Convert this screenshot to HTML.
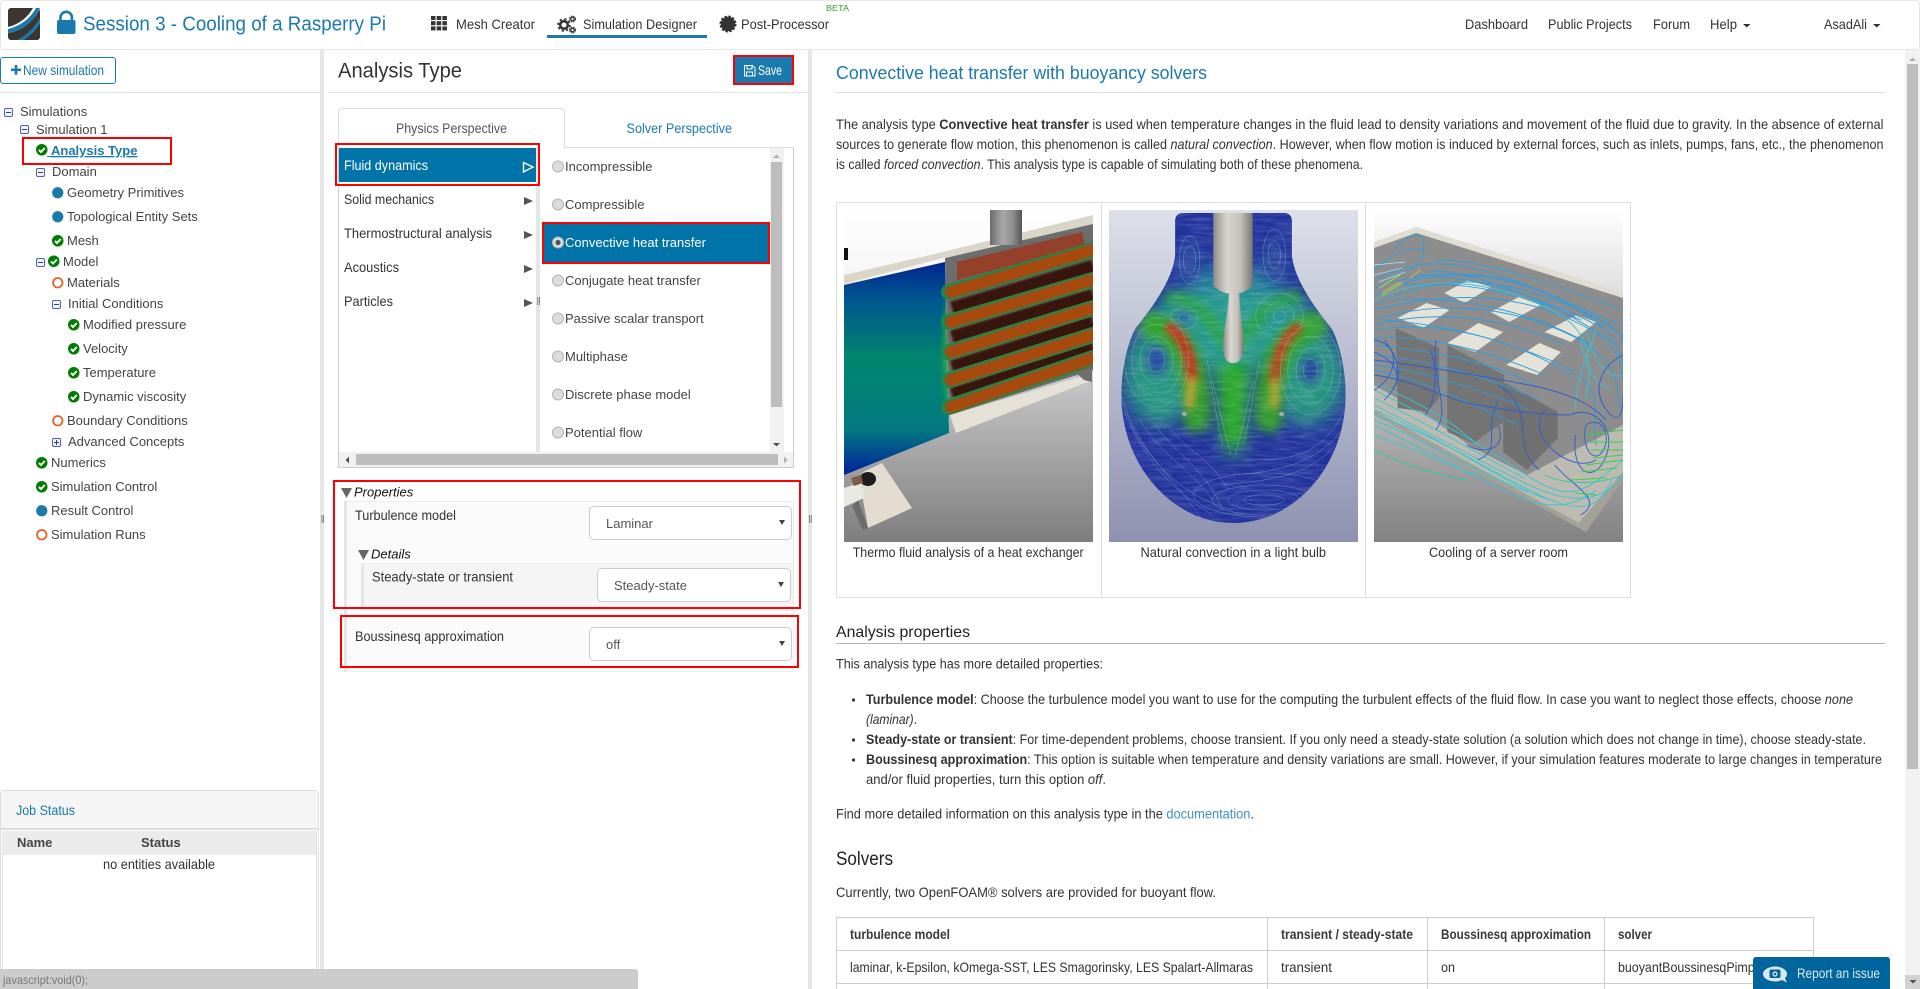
<!DOCTYPE html>
<html><head><meta charset="utf-8"><title>Analysis Type</title>
<style>
html,body{margin:0;padding:0;width:1920px;height:989px;overflow:hidden;background:#fff;font-family:"Liberation Sans",sans-serif}
.b{position:absolute;box-sizing:border-box}
svg.o{position:absolute;left:0;top:0}
svg text{font-family:"Liberation Sans",sans-serif}
.t{font-size:13px;fill:#444}
.l{font-size:14px;fill:#333}
.w{fill:#fff}
.red{position:absolute;box-sizing:border-box;border:2.5px solid #f00}
.sel{position:absolute;box-sizing:border-box;background:#fff;border:1px solid #ccc;border-radius:5px}
</style></head><body>

<!-- navbar -->
<div class="b" style="left:0;top:0;width:1920px;height:50px;background:#fff;border:1px solid #e7e7e7;border-radius:4px"></div>
<div class="b" style="left:547px;top:35px;width:160px;height:3px;background:#1a7aad"></div>

<!-- splitters -->
<div class="b" style="left:320px;top:50px;width:4px;height:939px;background:#e6e6e6"></div>
<div class="b" style="left:808px;top:50px;width:4px;height:939px;background:#e6e6e6"></div>

<!-- left -->
<div class="b" style="left:0;top:57px;width:116px;height:27px;border:1px solid #1a7aad;border-radius:3px;background:#fff"></div>
<div class="b" style="left:0;top:92px;width:320px;height:1px;background:#e4e4e4"></div>
<div class="red" style="left:22px;top:137px;width:150px;height:28px"></div>

<!-- job status -->
<div class="b" style="left:0;top:790px;width:319px;height:199px;border:1px solid #ddd;border-radius:4px 4px 0 0;background:#fff"></div>
<div class="b" style="left:1px;top:791px;width:317px;height:39px;background:#f5f5f5;border-bottom:2px solid #ddd"></div>
<div class="b" style="left:2px;top:831px;width:315px;height:158px;border-left:1px solid #ddd;border-right:1px solid #ddd;background:#fff"></div>
<div class="b" style="left:2px;top:831px;width:314px;height:24px;background:#ebebeb"></div>

<!-- center -->
<div class="b" style="left:328px;top:92px;width:480px;height:1px;background:#e6e6e6"></div>
<div class="b" style="left:733px;top:55px;width:61px;height:30px;background:#1a7aad;border:2.5px solid #f00"></div>
<div class="b" style="left:338px;top:147px;width:456px;height:321px;border:1px solid #ccc;border-top:1px solid #ddd;background:#fff"></div>
<div class="b" style="left:338px;top:108px;width:227px;height:41px;background:#fff;border:1px solid #ddd;border-bottom:none;border-radius:4px 4px 0 0"></div>
<div class="b" style="left:339px;top:147px;width:198px;height:5px;background:#fff"></div>
<div class="b" style="left:536px;top:148px;width:4px;height:304px;background:#e6e6e6"></div>
<div class="b" style="left:339px;top:148px;width:197px;height:34px;background:#0073a8"></div>
<div class="red" style="left:335px;top:143px;width:205px;height:43px"></div>
<div class="b" style="left:544px;top:224px;width:225px;height:38px;background:#0073a8"></div>
<div class="red" style="left:542px;top:222px;width:228px;height:42px"></div>
<!-- inner scrollbars -->
<div class="b" style="left:770px;top:148px;width:14px;height:304px;background:#f1f1f1"></div>
<div class="b" style="left:771px;top:162px;width:11px;height:245px;background:#bdbdbd"></div>
<div class="b" style="left:339px;top:452px;width:454px;height:15px;background:#f1f1f1"></div>
<div class="b" style="left:356px;top:454px;width:422px;height:11px;background:#bdbdbd"></div>

<!-- properties -->
<div class="b" style="left:344px;top:501px;width:450px;height:171px;background:#fbfbfb;border-left:3px solid #e6e6e6;border-top:1px solid #eee;border-bottom:1px solid #eee;border-right:1px solid #eee"></div>
<div class="b" style="left:361px;top:563px;width:432px;height:48px;background:#f5f5f5;border-left:3px solid #e6e6e6;border-top:1px solid #eee;border-bottom:1px solid #eee"></div>
<div class="sel" style="left:589px;top:506px;width:203px;height:34px"></div>
<div class="sel" style="left:597px;top:568px;width:194px;height:34px"></div>
<div class="sel" style="left:589px;top:627px;width:203px;height:34px"></div>
<div class="red" style="left:333px;top:480px;width:468px;height:129px"></div>
<div class="red" style="left:340px;top:615px;width:459px;height:53px"></div>

<!-- right scrollbar -->
<div class="b" style="left:1905px;top:50px;width:15px;height:939px;background:#f1f1f1"></div>
<div class="b" style="left:1907px;top:64px;width:11px;height:705px;background:#bdbdbd"></div>
<div class="b" style="left:1905px;top:975px;width:15px;height:14px;background:#d2d2d2"></div>

<!-- right content lines -->
<div class="b" style="left:836px;top:92px;width:1049px;height:1px;background:#ddd"></div>
<div class="b" style="left:836px;top:202px;width:795px;height:396px;border:1px solid #ddd"></div>
<div class="b" style="left:1101px;top:202px;width:1px;height:396px;background:#ddd"></div>
<div class="b" style="left:1365px;top:202px;width:1px;height:396px;background:#ddd"></div>
<div class="b" style="left:836px;top:643px;width:1049px;height:1px;background:#b5b5b5"></div>
<div class="b" style="left:836px;top:917px;width:978px;height:72px;border:1px solid #ccc;border-bottom:none"></div>
<div class="b" style="left:836px;top:950px;width:978px;height:1px;background:#ccc"></div>
<div class="b" style="left:836px;top:983px;width:978px;height:1px;background:#ccc"></div>
<div class="b" style="left:1267px;top:917px;width:1px;height:72px;background:#ccc"></div>
<div class="b" style="left:1427px;top:917px;width:1px;height:72px;background:#ccc"></div>
<div class="b" style="left:1604px;top:917px;width:1px;height:72px;background:#ccc"></div>

<!-- Image 1 -->
<svg class="o" style="left:844px;top:210px" width="249" height="332" viewBox="0 0 249 332">
<defs>
<linearGradient id="a1" x1="0" y1="0" x2="0" y2="1"><stop offset="0" stop-color="#fff"/><stop offset=".3" stop-color="#f1f1f1"/><stop offset=".5" stop-color="#c8c8c8"/><stop offset="1" stop-color="#7e7e7e"/></linearGradient>
<linearGradient id="a2" x1="0" y1="0" x2="0" y2="1"><stop offset="0" stop-color="#00258f"/><stop offset=".18" stop-color="#00578f"/><stop offset=".45" stop-color="#02846f"/><stop offset=".78" stop-color="#037a80"/><stop offset="1" stop-color="#00209a"/></linearGradient>
<linearGradient id="a3" x1="0" y1="0" x2="1" y2="0"><stop offset="0" stop-color="#6b6b6b"/><stop offset=".4" stop-color="#a8a8a8"/><stop offset=".7" stop-color="#8f8f8f"/><stop offset="1" stop-color="#555"/></linearGradient>
<filter id="f1"><feGaussianBlur stdDeviation="1"/></filter>
<filter id="f2" x="-60%" y="-20%" width="220%" height="140%"><feGaussianBlur stdDeviation="3"/></filter>
<clipPath id="c1"><path d="M0 75L101 52 105 223 0 265Z"/></clipPath>
</defs>
<rect width="249" height="332" fill="url(#a1)"/>
<path d="M0 65L99 42 249 5V17L99 48 0 74Z" fill="#d9d5c8"/>
<rect x="0" y="38" width="4" height="12" fill="#111"/>
<path d="M0 75L101 52 105 223 0 265Z" fill="url(#a2)"/>
<g clip-path="url(#c1)"><ellipse cx="106" cy="140" rx="6" ry="56" fill="#2fae3f" filter="url(#f2)"/></g>
<path d="M101 48L249 14V160L105 205Z" fill="#6d6d6d"/>
<path d="M113 52L238 22 241 36 113 70Z" fill="#93412a"/>
<g filter="url(#f1)">
<path d="M108 98L249 56" stroke="#38140f" stroke-width="13"/>
<path d="M108 127L249 85" stroke="#38140f" stroke-width="13"/>
<path d="M108 157L249 112" stroke="#38140f" stroke-width="13"/>
<path d="M108 184L249 137" stroke="#38140f" stroke-width="12"/>
</g>
<g fill="none" stroke-linecap="round">
<g stroke="#1d8a50" stroke-width="16"><path d="M105 82L249 40"/><path d="M105 112L249 70"/><path d="M105 142L249 98"/><path d="M105 170L249 125"/><path d="M105 197L249 148"/></g>
<g stroke="#a9480c" stroke-width="12" filter="url(#f1)"><path d="M107 82L249 40"/><path d="M107 112L249 70"/><path d="M107 142L249 98"/><path d="M107 170L249 125"/><path d="M107 197L249 148"/></g>
</g>
<path d="M106 205L249 163V170L112 223Z" fill="#e6e1d6"/>
<path d="M231 162L248 158V172L240 170Z" fill="#6f6f6f"/>
<rect x="146" y="0" width="32" height="35" fill="url(#a3)"/>
<path d="M19 262L38 253 68 298 24 318 19 290Z" fill="#e2ddd0"/>
<path d="M14 290L24 318 19 320 8 296Z" fill="#6c6c6c"/>
<path d="M0 278L18 272 20 288 0 297Z" fill="#e9e9e3"/>
<ellipse cx="24" cy="269" rx="8" ry="7" fill="#1d1d1d"/>
<path d="M7 268l10-3 2 8-9 3z" fill="#7d5a45"/>
</svg>

<!-- Image 2 -->
<svg class="o" style="left:1109px;top:210px" width="249" height="332" viewBox="0 0 241 332" preserveAspectRatio="none">
<defs>
<linearGradient id="b1" x1="0" y1="0" x2="0" y2="1"><stop offset="0" stop-color="#dde0e9"/><stop offset=".5" stop-color="#b6b9cd"/><stop offset="1" stop-color="#8e92b0"/></linearGradient>
<linearGradient id="b2" x1="0" y1="0" x2="1" y2="0"><stop offset="0" stop-color="#8f8d86"/><stop offset=".35" stop-color="#d8d6ce"/><stop offset=".7" stop-color="#c2c0b8"/><stop offset="1" stop-color="#787670"/></linearGradient>
<filter id="f3" x="-40%" y="-40%" width="180%" height="180%"><feGaussianBlur stdDeviation="9"/></filter>
<filter id="f4" x="-40%" y="-40%" width="180%" height="180%"><feGaussianBlur stdDeviation="5"/></filter>
<filter id="f5" x="-40%" y="-40%" width="180%" height="180%"><feGaussianBlur stdDeviation="3.5"/></filter>
<filter id="n1" x="0" y="0" width="100%" height="100%"><feTurbulence type="fractalNoise" baseFrequency=".05 .35" numOctaves="2" seed="4"/><feColorMatrix values="0 0 0 0 .75  0 0 0 0 .88  0 0 0 0 1  1.600 0 0 0 -.55"/></filter>
<clipPath id="c2"><path d="M64 11Q64 3 72 3H169Q177 3 177 11V45C179 70 201 100 215 118C223 132 229 160 229 185C229 255 180 313 120.500 313C61 313 12 255 12 185C12 160 18 132 26 118C40 100 62 70 64 45Z"/></clipPath>
</defs>
<rect width="241" height="332" fill="url(#b1)"/>
<g clip-path="url(#c2)">
<rect width="241" height="332" fill="#22329c"/>
<g filter="url(#f3)">
<ellipse cx="120" cy="118" rx="85" ry="42" fill="#259a90"/>
<ellipse cx="50" cy="165" rx="36" ry="50" fill="#259580"/>
<ellipse cx="192" cy="165" rx="36" ry="50" fill="#259580"/>
<path d="M98 150L143 150 128 245 113 245Z" fill="#22a04a"/>
<ellipse cx="120" cy="68" rx="50" ry="12" fill="#24789c"/>
</g>
<g filter="url(#f4)" fill="none" stroke-linecap="round" opacity=".9">
<path d="M42 115C70 120 90 170 85 210" stroke="#35a522" stroke-width="26"/>
<path d="M199 115C170 120 150 170 155 210" stroke="#35a522" stroke-width="26"/>
<path d="M120 165V225" stroke="#2ea822" stroke-width="18"/>
<path d="M60 88C80 88 100 110 110 130" stroke="#2ca344" stroke-width="14"/>
<path d="M181 88C160 88 140 110 130 130" stroke="#2ca344" stroke-width="14"/>
</g>
<g filter="url(#f5)" fill="none" stroke-linecap="round">
<path d="M60 118C72 128 80 145 80 170" stroke="#c82f14" stroke-width="11"/>
<path d="M182 118C168 128 161 150 160 172" stroke="#c03c14" stroke-width="10"/>
<path d="M80 172L78 195" stroke="#c8a02a" stroke-width="8"/>
<path d="M160 174L160 195" stroke="#b8a22a" stroke-width="8"/>
</g>
<g filter="url(#f4)"><ellipse cx="46" cy="150" rx="9" ry="14" fill="#2447a6"/><ellipse cx="195" cy="160" rx="9" ry="13" fill="#24409f"/><ellipse cx="73" cy="108" rx="7" ry="6" fill="#2a57a8"/><ellipse cx="165" cy="106" rx="7" ry="7" fill="#2b8da0"/><ellipse cx="78" cy="50" rx="10" ry="20" fill="#2b479f"/><ellipse cx="160" cy="50" rx="10" ry="20" fill="#2b479f"/></g>
<rect width="241" height="332" filter="url(#n1)" opacity=".22"/>
<g fill="none" stroke="#a9c8e4" stroke-width=".45" opacity=".6">
<ellipse cx="46" cy="150" rx="8" ry="12"/><ellipse cx="46" cy="150" rx="16" ry="24"/><ellipse cx="46" cy="150" rx="24" ry="36"/><ellipse cx="46" cy="150" rx="31" ry="47"/>
<ellipse cx="195" cy="160" rx="7" ry="11"/><ellipse cx="195" cy="160" rx="14" ry="22"/><ellipse cx="195" cy="160" rx="22" ry="34"/><ellipse cx="195" cy="160" rx="29" ry="45"/>
<ellipse cx="73" cy="108" rx="6" ry="5"/><ellipse cx="73" cy="108" rx="13" ry="11"/><ellipse cx="165" cy="106" rx="6" ry="6"/><ellipse cx="165" cy="106" rx="14" ry="14"/><ellipse cx="165" cy="106" rx="23" ry="23"/>
<ellipse cx="78" cy="50" rx="6" ry="14"/><ellipse cx="78" cy="50" rx="10" ry="24"/><ellipse cx="160" cy="45" rx="6" ry="14"/><ellipse cx="160" cy="45" rx="11" ry="26"/>
<ellipse cx="150" cy="290" rx="20" ry="5"/><ellipse cx="150" cy="290" rx="35" ry="10"/><ellipse cx="150" cy="290" rx="50" ry="15"/><ellipse cx="150" cy="285" rx="68" ry="22"/>
<path d="M14 200C40 260 80 290 120 300"/><path d="M20 215C45 265 70 285 100 305"/><path d="M12 185C25 240 70 275 90 310"/><path d="M30 210C45 240 80 260 100 290"/><path d="M45 215C60 240 95 260 110 300"/><path d="M60 220C75 240 100 250 115 280"/>
<path d="M228 200C205 250 170 250 130 250"/><path d="M225 220C200 255 160 262 120 265"/><path d="M215 240C190 265 160 270 110 275"/><path d="M100 170C105 190 110 215 118 245"/><path d="M140 170C135 190 130 215 122 245"/><path d="M95 150C100 180 105 215 110 235"/><path d="M146 150C140 180 135 215 130 235"/>
</g>
</g>
<path d="M101 3H139V76Q130 84 120 84Q110 84 101 76Z" fill="url(#b2)"/>
<path d="M116 82H126C127 110 132 125 130 142Q128 153 120 153Q112 153 111 142C109 125 115 110 116 82Z" fill="url(#b2)"/>
<ellipse cx="73" cy="204" rx="2.500" ry="2" fill="#aaa"/><ellipse cx="167" cy="204" rx="2.500" ry="2" fill="#aaa"/>
</svg>

<!-- Image 3 -->
<svg class="o" style="left:1374px;top:210px" width="249" height="332" viewBox="0 0 241 332" preserveAspectRatio="none">
<defs>
<linearGradient id="d1" x1="0" y1="0" x2="0" y2="1"><stop offset="0" stop-color="#fefefe"/><stop offset=".3" stop-color="#d8d8d8"/><stop offset=".65" stop-color="#b0b0b0"/><stop offset="1" stop-color="#828282"/></linearGradient>
</defs>
<rect width="241" height="332" fill="url(#d1)"/>
<path d="M0 32L41 17 241 82V88L0 38Z" fill="#dfdcd1"/>
<path d="M0 38L41 23 241 88V255L205 310 0 190Z" fill="#8d8d8d"/>
<path d="M0 175L51 205 96 238 148 265 241 215V262L198 313 0 200Z" fill="#bdbbb1"/>
<path d="M198 313L241 262V270L205 322 0 205V200Z" fill="#a3a198"/>
<path d="M21 118L63 138 63 188 51 202 23 198Z" fill="#747474"/>
<path d="M71 135L126 165 125 212 96 233 71 222Z" fill="#747474"/>
<path d="M125 172L178 202 178 228 148 260 125 242Z" fill="#717171"/>
<g fill="#e5e2d8">
<path d="M23 108L51 93 73 100 48 118Z"/><path d="M68 83L91 70 113 77 88 93Z"/><path d="M113 102L140 87 161 95 131 112Z"/><path d="M165 122L196 105 215 112 191 132Z"/><path d="M71 133L101 113 125 122 98 142Z"/><path d="M128 155L160 133 181 142 158 165Z"/>
</g>
<g fill="none" stroke-width=".9">
<g stroke="#2d9de0"><path d="M0 95C40 75 90 60 160 85S240 120 241 135"/><path d="M0 85C50 60 110 55 170 85S235 130 241 155"/><path d="M0 70C30 55 60 45 120 65S220 110 241 115"/><path d="M0 110C60 90 130 95 190 125S230 190 241 200"/><path d="M0 120C60 110 110 125 170 150S210 200 215 235"/><path d="M20 40C35 20 50 20 48 40S30 60 10 70"/><path d="M0 60C15 45 35 35 48 40"/><path d="M241 100C200 85 120 50 60 50"/>
<path d="M0 100C60 85 120 80 180 105S238 150 241 170"/><path d="M0 78C60 55 130 62 190 95S235 125 241 125"/><path d="M10 110C70 115 140 130 190 165"/><path d="M0 128C50 125 110 140 165 165"/><path d="M0 135C50 140 110 150 155 175"/><path d="M30 75C90 70 150 85 200 110"/><path d="M40 65C100 65 170 90 225 120"/>
<path d="M0 145C50 150 105 165 160 190"/><path d="M0 155C45 160 100 178 150 200"/><path d="M0 160C50 170 95 195 140 215"/><path d="M0 115C55 100 125 105 185 135"/><path d="M20 90C80 85 150 100 210 135"/><path d="M55 60C110 65 180 95 235 135"/></g>
<g stroke="#35c5d5"><path d="M0 195C40 215 100 250 150 275S230 285 241 265"/><path d="M0 205C60 225 110 260 160 285S220 290 230 270"/><path d="M0 180C50 205 90 225 140 260S200 285 241 250"/><path d="M0 215C40 235 85 260 125 280S190 300 215 280"/><path d="M0 90C50 65 100 70 150 90S215 130 205 190"/><path d="M0 225C30 235 70 255 100 265"/><path d="M215 120C205 150 195 170 195 200"/>
<path d="M0 188C45 210 95 240 145 268"/><path d="M0 200C50 220 100 255 150 282"/><path d="M0 210C50 230 100 265 170 290"/><path d="M0 172C35 190 70 205 100 235"/><path d="M205 120C212 150 225 170 241 165"/><path d="M200 130C205 160 215 175 230 180"/></g>
<g stroke="#2b5fd0"><path d="M0 130C30 135 20 170 0 180"/><path d="M10 130C25 150 30 170 10 190"/><path d="M60 130C55 170 75 200 60 220"/><path d="M120 190C105 225 125 240 100 250"/><path d="M120 215C130 240 105 245 90 235"/><path d="M190 205C210 195 235 215 225 245S190 265 195 225"/><path d="M205 215C220 205 230 225 222 240S200 240 205 215"/><path d="M165 200C145 225 190 265 215 250"/><path d="M241 145C220 155 210 180 225 200S241 195 241 185"/><path d="M175 255C190 275 225 290 200 305"/><path d="M120 175C160 200 130 235 160 260"/><path d="M0 165C40 170 70 190 100 195S160 205 190 205"/><path d="M0 150C40 155 100 165 150 175S215 200 225 210"/><path d="M0 142C20 150 28 165 18 180"/><path d="M55 140C62 165 60 190 50 205"/></g>
<g stroke="#25c9a0"><path d="M0 240C30 255 60 265 90 270"/><path d="M165 265C185 275 215 275 241 265"/></g>
<g stroke="#34d04a"><path d="M205 225L241 220"/><path d="M210 240L241 240"/><path d="M205 255L241 250"/><path d="M190 270L225 268"/><path d="M195 283L215 285"/><path d="M208 232L241 232"/><path d="M212 248L241 245"/><path d="M200 262L235 258"/></g>
<g stroke="#9fe23a" stroke-width="1"><path d="M5 78L25 65"/><path d="M8 85L28 72"/></g>
<g stroke="#e6b32e" stroke-width="1"><path d="M8 82L25 72"/><path d="M35 68L45 60"/></g>
<g stroke="#9edcf0"><path d="M0 55L30 52"/><path d="M0 65L28 58"/><path d="M5 72L30 62"/></g>
</g>
</svg>

<!-- main overlay: icons + text -->
<svg class="o" width="1920" height="989" viewBox="0 0 1920 989">
<defs>
<g id="chk"><circle cx="5.750" cy="5.750" r="5.750" fill="#007c00"/><path d="M2.900 5.900L5 8 8.800 4" fill="none" stroke="#fff" stroke-width="1.900"/></g>
<g id="mi"><rect x=".5" y=".5" width="8" height="8" rx="1.400" fill="#f4f5fb" stroke="#4c60b8"/><path d="M2 4.500H7" stroke="#2c3ea0"/></g>
<g id="pl"><rect x=".5" y=".5" width="8" height="8" rx="1.400" fill="#f4f5fb" stroke="#4c60b8"/><path d="M2 4.500H7M4.500 2V7" stroke="#2c3ea0"/></g>
<g id="ring"><circle cx="5.750" cy="5.750" r="4.750" fill="#fff" stroke="#e8622a" stroke-width="1.800"/></g>
<g id="dot"><circle cx="5.750" cy="5.750" r="5.600" fill="#1a7aad"/></g>
<g id="rad"><circle cx="6" cy="6" r="5.500" fill="#dcdcdc" stroke="#b5b5b5"/></g>
</defs>

<!-- logo -->
<rect x="8" y="8" width="32" height="32" rx="3" fill="#3b3632"/>
<path d="M8 27C20 24 28 17 33 8H40V9C33 22 22 31 8 33Z" fill="#fff"/>
<path d="M8 29C20 26 30 19 36 8H40C34 22 22 31 8 33Z" fill="#1a7aad"/>
<path d="M17 40C26 36 34 28 40 18V24C35 31 30 36 24 40Z" fill="#1a7aad"/>
<!-- lock -->
<rect x="57" y="20" width="18.500" height="14" rx="2" fill="#1a7aad"/>
<path d="M60.500 21V17.500a5.700 5.700 0 0 1 11.400 0V21" fill="none" stroke="#1a7aad" stroke-width="2.600"/>
<text x="83" y="30.500" font-size="20" fill="#1a7aad" textLength="303" lengthAdjust="spacingAndGlyphs">Session 3 - Cooling of a Rasperry Pi</text>

<!-- mesh icon -->
<g fill="#333"><rect x="431" y="16" width="4.500" height="4"/><rect x="436.700" y="16" width="4.500" height="4"/><rect x="442.400" y="16" width="4.500" height="4"/><rect x="431" y="21.200" width="4.500" height="4"/><rect x="436.700" y="21.200" width="4.500" height="4"/><rect x="442.400" y="21.200" width="4.500" height="4"/><rect x="431" y="26.400" width="4.500" height="4"/><rect x="436.700" y="26.400" width="4.500" height="4"/><rect x="442.400" y="26.400" width="4.500" height="4"/></g>
<text x="456" y="29" class="l" textLength="79" lengthAdjust="spacingAndGlyphs">Mesh Creator</text>
<!-- gears icon -->
<g fill="none" stroke="#333"><circle cx="564" cy="25" r="3.800" stroke-width="2.600"/><circle cx="564" cy="25" r="6" stroke-width="1.600" stroke-dasharray="2.400 2.300"/><circle cx="572.500" cy="19" r="1.800" stroke-width="1.400"/><circle cx="572.500" cy="19" r="3" stroke-width="1" stroke-dasharray="1.500 .9"/><circle cx="572.500" cy="30" r="1.800" stroke-width="1.400"/><circle cx="572.500" cy="30" r="3" stroke-width="1" stroke-dasharray="1.500 .9"/></g>
<text x="583" y="29" class="l" textLength="114" lengthAdjust="spacingAndGlyphs">Simulation Designer</text>
<!-- post-processor icon -->
<circle cx="728" cy="24" r="7.200" fill="#333"/><circle cx="728" cy="24" r="7.800" fill="none" stroke="#333" stroke-width="1.400" stroke-dasharray="2.500 1.600"/>
<text x="741" y="29" class="l" textLength="88" lengthAdjust="spacingAndGlyphs">Post-Processor</text>
<text x="826" y="11" font-size="8" fill="#2f9a2f" textLength="23" lengthAdjust="spacingAndGlyphs">BETA</text>

<text x="1465" y="29" class="l" textLength="63" lengthAdjust="spacingAndGlyphs">Dashboard</text>
<text x="1548" y="29" class="l" textLength="84" lengthAdjust="spacingAndGlyphs">Public Projects</text>
<text x="1653" y="29" class="l" textLength="37" lengthAdjust="spacingAndGlyphs">Forum</text>
<text x="1710" y="29" class="l" textLength="27" lengthAdjust="spacingAndGlyphs">Help</text>
<path d="M1743 24h7.500l-3.700 3.500z" fill="#333"/>
<text x="1824" y="29" class="l" textLength="43" lengthAdjust="spacingAndGlyphs">AsadAli</text>
<path d="M1873 24h7.500l-3.700 3.500z" fill="#333"/>

<!-- new simulation -->
<path d="M11 68.500h3.700V65h2.600v3.500H21v2.600h-3.700v3.700h-2.600v-3.700H11z" fill="#1a7aad"/>
<text x="23" y="75" class="l" style="fill:#1a7aad" textLength="81" lengthAdjust="spacingAndGlyphs">New simulation</text>

<!-- tree -->
<use href="#mi" x="4" y="108"/><text x="20" y="116" class="t">Simulations</text>
<use href="#mi" x="20" y="125"/><text x="36" y="134" class="t">Simulation 1</text>
<use href="#chk" x="36" y="144"/><text x="51" y="155" font-size="13" font-weight="bold" fill="#1a7aad" text-decoration="underline">Analysis Type</text>
<path d="M47 156.500H51" stroke="#1a7aad"/>
<use href="#mi" x="36" y="168"/><text x="52" y="176" class="t">Domain</text>
<use href="#dot" x="52" y="187"/><text x="67" y="197" class="t">Geometry Primitives</text>
<use href="#dot" x="52" y="211"/><text x="67" y="221" class="t">Topological Entity Sets</text>
<use href="#chk" x="52" y="235"/><text x="67" y="245" class="t">Mesh</text>
<use href="#mi" x="36" y="258"/><use href="#chk" x="48" y="255.500"/><text x="63" y="266" class="t">Model</text>
<use href="#ring" x="52" y="277"/><text x="67" y="287" class="t">Materials</text>
<use href="#mi" x="52" y="300"/><text x="68" y="308" class="t">Initial Conditions</text>
<use href="#chk" x="68" y="319"/><text x="83" y="329" class="t">Modified pressure</text>
<use href="#chk" x="68" y="343"/><text x="83" y="353" class="t">Velocity</text>
<use href="#chk" x="68" y="367"/><text x="83" y="377" class="t">Temperature</text>
<use href="#chk" x="68" y="391"/><text x="83" y="401" class="t">Dynamic viscosity</text>
<use href="#ring" x="52" y="415"/><text x="67" y="425" class="t">Boundary Conditions</text>
<use href="#pl" x="52" y="438"/><text x="68" y="446" class="t">Advanced Concepts</text>
<use href="#chk" x="36" y="457"/><text x="51" y="467" class="t">Numerics</text>
<use href="#chk" x="36" y="481"/><text x="51" y="491" class="t">Simulation Control</text>
<use href="#dot" x="36" y="505"/><text x="51" y="515" class="t">Result Control</text>
<use href="#ring" x="36" y="529"/><text x="51" y="539" class="t">Simulation Runs</text>

<!-- splitter grips -->
<g fill="#777"><rect x="321.500" y="515" width=".9" height="8"/><rect x="323.200" y="515" width=".9" height="8"/><rect x="809" y="515" width=".9" height="8"/><rect x="810.800" y="515" width=".9" height="8"/><rect x="537.300" y="297" width=".9" height="8"/><rect x="539" y="297" width=".9" height="8"/></g>

<!-- job status -->
<text x="16" y="815" class="l" style="fill:#1a7aad" textLength="59" lengthAdjust="spacingAndGlyphs">Job Status</text>
<text x="17" y="847" font-size="13" font-weight="bold" fill="#444">Name</text>
<text x="141" y="847" font-size="13" font-weight="bold" fill="#444">Status</text>
<text x="103" y="869" class="l" textLength="112" lengthAdjust="spacingAndGlyphs">no entities available</text>

<!-- center -->
<text x="338" y="77.500" font-size="21.500" fill="#333" textLength="124" lengthAdjust="spacingAndGlyphs">Analysis Type</text>
<path d="M744.500 65.500h8l2.500 2.500v8h-10.500zM747 65.500v3.500h5v-3.500M746.500 76v-4h6v4" fill="none" stroke="#fff" stroke-width="1"/>
<text x="758" y="75" class="l" style="fill:#fff" textLength="24" lengthAdjust="spacingAndGlyphs">Save</text>
<text x="396" y="133" class="l" style="fill:#555" textLength="111" lengthAdjust="spacingAndGlyphs">Physics Perspective</text>
<text x="626.500" y="133" class="l" style="fill:#1a7aad" textLength="105.500" lengthAdjust="spacingAndGlyphs">Solver Perspective</text>

<text x="344" y="170" class="l" style="fill:#fff" textLength="84" lengthAdjust="spacingAndGlyphs">Fluid dynamics</text>
<text x="344" y="204" class="l" textLength="90" lengthAdjust="spacingAndGlyphs">Solid mechanics</text>
<text x="344" y="238" class="l" textLength="148" lengthAdjust="spacingAndGlyphs">Thermostructural analysis</text>
<text x="344" y="272" class="l" textLength="55" lengthAdjust="spacingAndGlyphs">Acoustics</text>
<text x="344" y="306" class="l" textLength="49" lengthAdjust="spacingAndGlyphs">Particles</text>
<path d="M523.500 162.500L533 167 523.500 172Z" fill="none" stroke="#fff" stroke-width="1.400"/>
<g fill="#555"><path d="M524 197l9 4-9 4z"/><path d="M524 231l9 4-9 4z"/><path d="M524 265l9 4-9 4z"/><path d="M524 299l9 4-9 4z"/></g>

<use href="#rad" x="552" y="160.500"/><text x="565" y="171" class="t">Incompressible</text>
<use href="#rad" x="552" y="198.500"/><text x="565" y="209" class="t">Compressible</text>
<use href="#rad" x="552" y="236.500"/><circle cx="558" cy="242.500" r="2.600" fill="#555"/><text x="565" y="247" class="t" style="fill:#fff">Convective heat transfer</text>
<use href="#rad" x="552" y="274.500"/><text x="565" y="285" class="t">Conjugate heat transfer</text>
<use href="#rad" x="552" y="312.500"/><text x="565" y="323" class="t">Passive scalar transport</text>
<use href="#rad" x="552" y="350.500"/><text x="565" y="361" class="t">Multiphase</text>
<use href="#rad" x="552" y="388.500"/><text x="565" y="399" class="t">Discrete phase model</text>
<use href="#rad" x="552" y="426.500"/><text x="565" y="437" class="t">Potential flow</text>
<path d="M773 158l3.500-3.500 3.500 3.500z" fill="#b0b0b0"/><path d="M773 443h7l-3.500 3.500z" fill="#505050"/>
<path d="M349 456.500v7l-3.500-3.500z" fill="#505050"/><path d="M784 456.500v7l3.500-3.500z" fill="#b0b0b0"/>

<path d="M341 488h11l-5.500 10z" fill="#666"/>
<text x="354" y="496.500" font-size="13" font-style="italic" fill="#111">Properties</text>
<text x="355" y="520" class="l" textLength="101" lengthAdjust="spacingAndGlyphs">Turbulence model</text>
<text x="606" y="528" class="t" style="fill:#555">Laminar</text>
<path d="M779 520h6l-3 5z" fill="#444"/>
<path d="M358 550h11l-5.500 10z" fill="#666"/>
<text x="371" y="558.500" font-size="13" font-style="italic" fill="#111">Details</text>
<text x="372" y="581.700" class="l" textLength="141" lengthAdjust="spacingAndGlyphs">Steady-state or transient</text>
<text x="614" y="590" class="t" style="fill:#555">Steady-state</text>
<path d="M778 582h6l-3 5z" fill="#444"/>
<text x="355" y="641" class="l" textLength="149" lengthAdjust="spacingAndGlyphs">Boussinesq approximation</text>
<text x="606" y="649" class="t" style="fill:#555">off</text>
<path d="M779 641h6l-3 5z" fill="#444"/>

<!-- right -->
<path d="M1909 61l3.500-3.500 3.500 3.500z" fill="#b0b0b0"/><path d="M1909.500 980h7l-3.500 3.500z" fill="#505050"/>
<text x="836" y="79" font-size="18.500" fill="#1a7aad" textLength="371" lengthAdjust="spacingAndGlyphs">Convective heat transfer with buoyancy solvers</text>
<text x="836" y="129" class="l" textLength="1047.500" lengthAdjust="spacingAndGlyphs">The analysis type <tspan font-weight="bold">Convective heat transfer</tspan> is used when temperature changes in the fluid lead to density variations and movement of the fluid due to gravity. In the absence of external</text>
<text x="836" y="149" class="l" textLength="1047.500" lengthAdjust="spacingAndGlyphs">sources to generate flow motion, this phenomenon is called <tspan font-style="italic">natural convection</tspan>. However, when flow motion is induced by external forces, such as inlets, pumps, fans, etc., the phenomenon</text>
<text x="836" y="169" class="l" textLength="527" lengthAdjust="spacingAndGlyphs">is called <tspan font-style="italic">forced convection</tspan>. This analysis type is capable of simulating both of these phenomena.</text>

<text x="852.700" y="557" class="l" textLength="231" lengthAdjust="spacingAndGlyphs">Thermo fluid analysis of a heat exchanger</text>
<text x="1140.500" y="557" class="l" textLength="185.500" lengthAdjust="spacingAndGlyphs">Natural convection in a light bulb</text>
<text x="1429" y="557" class="l" textLength="139" lengthAdjust="spacingAndGlyphs">Cooling of a server room</text>

<text x="836" y="637" font-size="16" fill="#222" textLength="134" lengthAdjust="spacingAndGlyphs">Analysis properties</text>
<text x="836" y="668.500" class="l" textLength="267" lengthAdjust="spacingAndGlyphs">This analysis type has more detailed properties:</text>
<g fill="#333"><circle cx="853.500" cy="700" r="1.600"/><circle cx="853.500" cy="740" r="1.600"/><circle cx="853.500" cy="760" r="1.600"/></g>
<text x="866" y="704" class="l" textLength="987" lengthAdjust="spacingAndGlyphs"><tspan font-weight="bold">Turbulence model</tspan>: Choose the turbulence model you want to use for the computing the turbulent effects of the fluid flow. In case you want to neglect those effects, choose <tspan font-style="italic">none</tspan></text>
<text x="866" y="724" class="l" font-style="italic" textLength="51" lengthAdjust="spacingAndGlyphs">(laminar)<tspan font-style="normal">.</tspan></text>
<text x="866" y="744" class="l" textLength="1000" lengthAdjust="spacingAndGlyphs"><tspan font-weight="bold">Steady-state or transient</tspan>: For time-dependent problems, choose transient. If you only need a steady-state solution (a solution which does not change in time), choose steady-state.</text>
<text x="866" y="764" class="l" textLength="1016" lengthAdjust="spacingAndGlyphs"><tspan font-weight="bold">Boussinesq approximation</tspan>: This option is suitable when temperature and density variations are small. However, if your simulation features moderate to large changes in temperature</text>
<text x="866" y="784" class="l" textLength="240" lengthAdjust="spacingAndGlyphs">and/or fluid properties, turn this option <tspan font-style="italic">off</tspan>.</text>
<text x="836" y="818.500" class="l" textLength="418" lengthAdjust="spacingAndGlyphs">Find more detailed information on this analysis type in the <tspan fill="#3f8fc4">documentation</tspan>.</text>
<text x="836" y="865" font-size="19" fill="#222" textLength="57" lengthAdjust="spacingAndGlyphs">Solvers</text>
<text x="836" y="897" class="l" textLength="380" lengthAdjust="spacingAndGlyphs">Currently, two OpenFOAM® solvers are provided for buoyant flow.</text>

<g font-weight="bold" font-size="14" fill="#3a3a3a">
<text x="850" y="939" textLength="100" lengthAdjust="spacingAndGlyphs">turbulence model</text>
<text x="1281" y="939" textLength="132" lengthAdjust="spacingAndGlyphs">transient / steady-state</text>
<text x="1441" y="939" textLength="150" lengthAdjust="spacingAndGlyphs">Boussinesq approximation</text>
<text x="1618" y="939" textLength="34" lengthAdjust="spacingAndGlyphs">solver</text>
</g>
<text x="850" y="972" class="l" textLength="403" lengthAdjust="spacingAndGlyphs">laminar, k-Epsilon, kOmega-SST, LES Smagorinsky, LES Spalart-Allmaras</text>
<text x="1281" y="972" class="l" textLength="51" lengthAdjust="spacingAndGlyphs">transient</text>
<text x="1441" y="972" class="l" textLength="14" lengthAdjust="spacingAndGlyphs">on</text>
<text x="1618" y="972" class="l" textLength="178" lengthAdjust="spacingAndGlyphs">buoyantBoussinesqPimpleFoam</text>
</svg>

<!-- status bar -->
<div class="b" style="left:0;top:969px;width:638px;height:20px;background:#ccc;border-radius:0 3px 0 0"></div>
<!-- report button -->
<div class="b" style="left:1753px;top:957px;width:137px;height:32px;background:#00659c;border-radius:3px 3px 0 0"></div>
<svg class="o" width="1920" height="989" viewBox="0 0 1920 989" style="pointer-events:none">
<text x="3" y="984" font-size="12" fill="#777" textLength="85" lengthAdjust="spacingAndGlyphs">javascript:void(0);</text>
<ellipse cx="1775" cy="974" rx="12" ry="7.500" fill="#dbe8f1"/>
<path d="M1780 979l7 3.500-3-6z" fill="#dbe8f1"/>
<rect x="1769.500" y="969.500" width="11" height="8.500" rx="1.500" fill="#00659c"/>
<circle cx="1775" cy="974" r="2.600" fill="#dbe8f1"/><circle cx="1775" cy="974" r="1.300" fill="#00659c"/>
<text x="1797" y="978" font-size="14" fill="#dbe8f1" textLength="83" lengthAdjust="spacingAndGlyphs">Report an issue</text>
</svg>
</body></html>
